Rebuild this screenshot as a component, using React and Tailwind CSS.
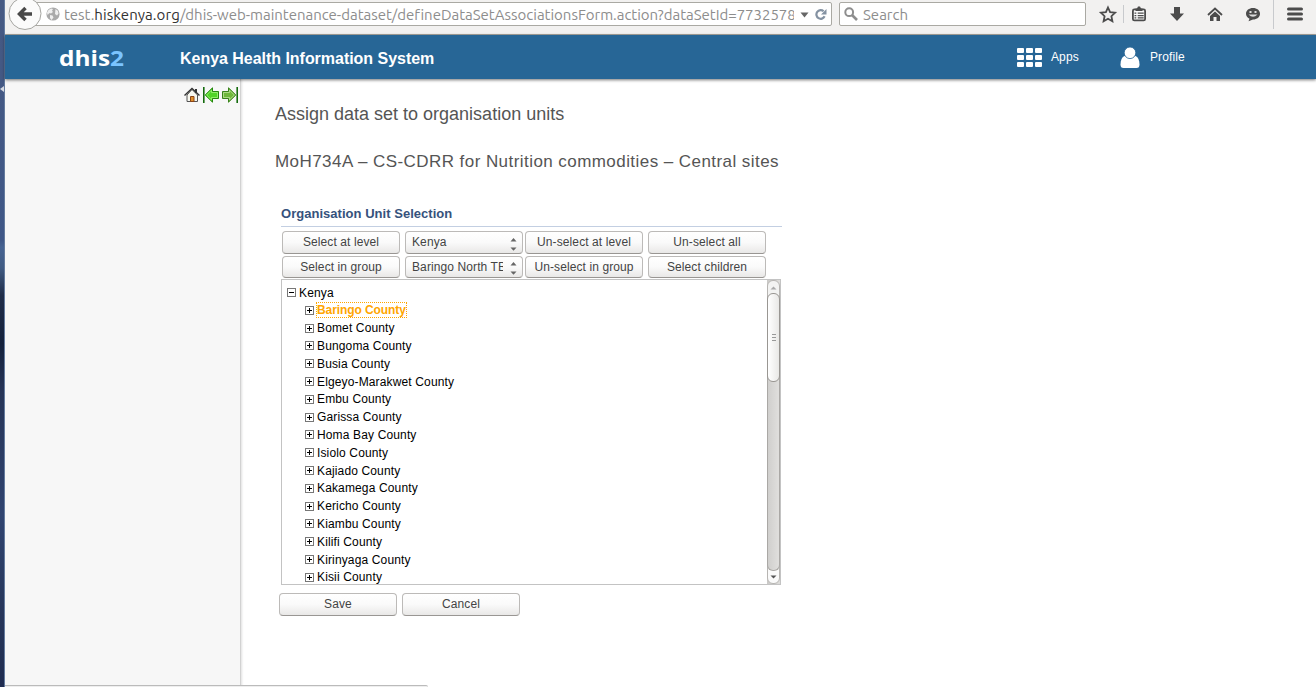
const counties = ['Baringo', 'Bomet', 'Bungoma', 'Busia', 'Elgeyo-Marakwet', 'Embu', 'Garissa', 'Homa Bay', 'Isiolo', 'Kajiado', 'Kakamega', 'Kericho', 'Kiambu', 'Kilifi', 'Kirinyaga', 'Kisii'];

const control = 'box-border shrink-0 w-[118px] rounded-[4px] border border-[#bcbab8] border-b-[#999693] bg-linear-to-b from-white via-[#fafafa] to-[#e9e8e7] text-[12px] leading-[14px] tracking-[0.1px] text-[#444]';

function Button({ children, className = 'h-[23px]' }) {
  return <button className={`${control} ${className} flex items-center justify-center pb-px`}>{children}</button>;
}

function Select({ children, className = 'h-[23px]' }) {
  return (
    <div className={`${control} ${className} flex items-center justify-between pl-[6px] pr-[5px]`}>
      <span className="w-[91px] overflow-hidden whitespace-nowrap pb-px">{children}</span>
      <svg width="7" height="13" viewBox="0 0 7 13" className="mt-[3px] shrink-0" fill="#666">
        <path d="M3.5 0 6.5 3.5h-6zM.5 9.5h6l-3 3.2z" />
      </svg>
    </div>
  );
}

function Toggle({ open }) {
  return (
    <svg width="9" height="9" viewBox="0 0 9 9" shapeRendering="crispEdges" className="shrink-0">
      <path d="M.5.5h8v8h-8z" fill="#fff" stroke="#777" />
      <path d={open ? 'M2 4.5h5' : 'M2 4.5h5M4.5 2v5'} stroke="#000" />
    </svg>
  );
}

function Toolbar() {
  return (
    <div className="flex h-[35px] shrink-0 border-b border-[#aaa79f] bg-[#f2f1f0] font-['Ubuntu','Noto_Sans',sans-serif] text-[15px] text-[#8d8d8d]">
      <div className="relative z-10 w-[35px] shrink-0">
        <svg width="36" height="34" viewBox="5 0 36 34" className="block overflow-visible">
          <circle cx="25" cy="13.5" r="16" fill="#fbfbfb" stroke="#a5a5a1" />
          <path d="M25.5 8 19.5 14l6 6M20.5 14H32" fill="none" stroke="#494949" strokeWidth="3.5" />
        </svg>
      </div>
      <div className="-ml-[7px] mt-[2px] flex h-[24px] w-[799px] shrink-0 items-center rounded-[2px] border border-[#aaa9a3] bg-white pl-[12px]">
        <svg width="14" height="14" viewBox="0 0 14 14" className="shrink-0">
          <circle cx="7" cy="7" r="6.6" fill="#aaa" />
          <path d="M2.5 3 5 1.5 7 2 6 3.800 7 5 5 6.500 3.500 6 1.500 8 1 5.500zM4 8l2.500.5 1 2L5.500 13 4 11zM9.500 2l2.500 2 .5 2.500L11 8.500 9 7z" fill="#efefef" />
        </svg>
        <span className="ml-[4px] w-[730px] shrink-0 overflow-hidden whitespace-nowrap pt-[2px] tracking-[-0.02px]">
          test.<span className="tracking-[0.1px] text-[#333]">hiskenya.org</span>/dhis-web-maintenance-dataset/defineDataSetAssociationsForm.action?dataSetId=7732578
        </span>
        <svg width="9" height="6" viewBox="0 0 9 6" className="ml-[6px] mt-[2px] shrink-0"><path d="M.5.500h8l-4 5z" fill="#666" /></svg>
        <svg width="12" height="13" viewBox="0 0 12 13" className="ml-[6px] shrink-0">
          <path d="M9.6 8.3A4.300 4.300 0 1 1 8.600 3.300" fill="none" stroke="#8492a2" strokeWidth="2.200" />
          <path d="M11.500 1v5.500H6z" fill="#8492a2" />
        </svg>
      </div>
      <div className="ml-[7px] mt-[2px] flex h-[24px] w-[247px] shrink-0 items-center rounded-[2px] border border-[#aaa9a3] bg-white pl-[4px]">
        <svg width="14" height="14" viewBox="0 0 14 14" fill="none" stroke="#8e8e8e"><circle cx="5.200" cy="5.200" r="3.900" strokeWidth="2" /><path d="m8 8 5 5" strokeWidth="2.600" /></svg>
        <span className="ml-[5px] pt-[2px]">Search</span>
      </div>
      <svg width="229" height="34" viewBox="1087 0 229 34" className="ml-px block shrink-0" fill="#4c4c4c">
        <path d="m1108 7.500 2.100 4.700 5 .5-3.700 3.500 1 5.100-4.400-2.600-4.400 2.600 1-5.100-3.700-3.500 5-.5z" fill="none" stroke="#4c4c4c" strokeWidth="1.800" />
        <path d="M1123.500 5v18M1273.500 0v29" stroke="#c8cacd" />
        <rect x="1132.900" y="9.400" width="12.200" height="11" rx="1.500" fill="#fafafa" stroke="#4c4c4c" strokeWidth="1.800" />
        <path d="M1135.500 11V8.500h1.500L1138 6.500h2l1 2h1.500V11z" />
        <path d="M1134.500 12.500h1.800v1.300h-1.800zm3.200 0h6v1.300h-6zm-3.200 2.400h1.800v1.300h-1.800zm3.200 0h6v1.300h-6zm-3.200 2.400h1.800v1.300h-1.800zm3.200 0h6v1.300h-6z" />
        <path d="M1174 7h6v6.500h4l-7 7.500-7-7.500h4z" />
        <path d="M1208 15 1215 8.500l7 6.500" fill="none" stroke="#4c4c4c" strokeWidth="1.800" />
        <path d="m1210 16 5-4.500 5 4.500v5h-3.500v-4h-3v4h-3.500z" />
        <path d="M1253 8c4 0 7 2.400 7 5.800s-3 5.800-7 5.800l-4.500 1.700 1-2.600c-2.300-1-3.500-2.800-3.500-4.900 0-3.400 3-5.800 7-5.800z" />
        <path d="M1249.500 11h2v2h-2zm5 0h2v2h-2z" fill="#ddd" />
        <path d="M1248.500 14.500h9q-4.500 4.500-9 0" fill="#ddd" />
        <path d="M1288.500 9h13M1288.500 14h13M1288.500 19h13" stroke="#4c4c4c" strokeWidth="3" strokeLinecap="round" />
      </svg>
    </div>
  );
}

function Header() {
  return (
    <header className="relative z-10 flex h-[44px] shrink-0 items-center bg-[#276696] text-white shadow-[0_1px_3px_rgba(0,0,0,0.55)]">
      <div className="ml-[54px] w-[121px] font-['Open_Sans'] text-[22px] leading-[30px] font-bold"><span className="inline-block origin-left scale-x-[1.11]">dhis<span className="text-[#7bc4ff]">2</span></span></div>
      <div className="w-[837px] pt-[3px] text-[16px] leading-[20px] font-bold tracking-[-0.03px]">Kenya Health Information System</div>
      <svg width="25" height="19" viewBox="0 0 25 19" fill="#fff">
        {[0, 9, 18].map((x) => [0, 7, 14].map((y) => <rect key={`${x}-${y}`} x={x} y={y} width="7" height="5" rx="1" />))}
      </svg>
      <span className="ml-[9px] w-[69px] text-[12px] tracking-[0.1px]">Apps</span>
      <svg width="20" height="21" viewBox="0 0 20 21" fill="#fff" className="mt-px">
        <path d="M4.500 9C2 10 .5 13 .5 17.500 .5 20 1.500 21 3.500 21h13c2 0 3-1 3-3.500C19.500 13 18 10 15.500 9z" />
        <circle cx="10" cy="5.800" r="5.800" fill="#fff" stroke="#276696" strokeWidth=".8" />
      </svg>
      <span className="ml-[10px] text-[12px] tracking-[0.1px]">Profile</span>
    </header>
  );
}

function Sidebar() {
  return (
    <aside className="w-[236px] shrink-0 border-r border-[#d2d2d2] bg-[#f7f7f7] pl-[179px] pt-[8px] shadow-[1px_0_2px_rgba(0,0,0,0.12)]">
      <div className="flex gap-[3px]">
        <svg width="16" height="16" viewBox="0 0 16 16">
          <path d="M3 8v6.500h10.500V8L8 2.500z" fill="#f7f7ef" stroke="#555" />
          <path d="M12 2v4" stroke="#333" strokeWidth="2" />
          <path d="M.5 8.500 8 1.500l7.500 7" fill="none" stroke="#333" strokeWidth="1.400" />
          <path d="M6.500 9.500h3.500v5H6.500z" fill="#e0902c" stroke="#8a4518" />
        </svg>
        <svg width="16" height="16" viewBox="0 0 16 16">
          <path d="M.8 0v16" stroke="#146b0d" strokeWidth="1.600" />
          <path d="M2.200 8 9.500.8v3.700h6v7h-6v3.700z" fill="#50d427" stroke="#25850f" />
          <path d="M3.700 8 8.500 3.200v2.300h6v5h-6v2.300z" fill="none" stroke="#a1f47b" strokeWidth=".8" />
        </svg>
        <svg width="16" height="16" viewBox="0 0 16 16">
          <path d="M15.200 0v16" stroke="#146b0d" strokeWidth="1.600" />
          <path d="M13.800 8 6.500.8v3.700h-6v7h6v3.700z" fill="#6fb83c" stroke="#38811b" />
          <path d="M12.300 8 7.500 3.200v2.300h-6v5h6v2.300z" fill="none" stroke="#bde398" strokeWidth=".8" />
        </svg>
      </div>
    </aside>
  );
}

function Tree() {
  return (
    <div className="ml-[6px] flex h-[306px] w-[500px] overflow-hidden border border-[#c3c3c3] text-[12px] tracking-[0.140px] text-black">
      <div className="min-w-0 grow pl-[5px] pt-[3.700px]">
        <div className="flex h-[17.800px] items-center gap-[3px]"><Toggle open /><span>Kenya</span></div>
        {counties.map((name, i) => (
          <div key={name} className="flex h-[17.800px] items-center gap-[3px] pl-[18px]">
            <Toggle />
            {i === 0
              ? <span className="-ml-px border border-dotted border-[#ffa500] font-bold leading-[14px] tracking-[-0.080px] text-[#ffa500]">{name} County</span>
              : <span>{name} County</span>}
          </div>
        ))}
      </div>
      <div className="flex w-[13px] shrink-0 flex-col bg-linear-to-r from-[#cac9c7] to-[#dedddb]">
        <div className="-mb-[5px] flex h-[18px] items-start justify-center rounded-t-[6px] border border-[#b7b5b2] bg-[#f3f3f2] pt-[5px]">
          <svg width="7" height="4" viewBox="0 0 7 4"><path d="M.5 3.500h6L3.500.5z" fill="#aaa" /></svg>
        </div>
        <div className="relative z-10 flex h-[89px] shrink-0 items-center justify-center rounded-[6px] border border-[#999692] bg-linear-to-r from-white to-[#e9e8e6]">
          <svg width="4" height="8" viewBox="0 0 4 8"><path d="M0 .5h4M0 3.500h4M0 6.500h4" stroke="#999" /></svg>
        </div>
        <div className="relative -mt-[8px] -mb-[6px] grow rounded-b-[6px] border-x border-b border-[#aaa8a5] bg-linear-to-r from-[#d0cfcd] to-[#e0dfdd]" />
        <div className="flex h-[19px] shrink-0 items-end justify-center rounded-b-[6px] border border-[#b7b5b2] bg-[#fafafa] pb-[4px]">
          <svg width="7" height="4" viewBox="0 0 7 4"><path d="M.5.500h6l-3 3z" fill="#555" /></svg>
        </div>
      </div>
    </div>
  );
}

export default function App() {
  return (
    <div className="flex h-[687px] w-[1316px] overflow-hidden bg-white font-['Liberation_Sans',Arial,sans-serif]">
      <div className="flex w-[5px] shrink-0 border-r border-[#657ca0] bg-[linear-gradient(#475a83_0%,#3f5787_35%,#466392_36%,#405b83_39%,#202d49_43%,#14213c_50%,#263457_57%,#304470_75%,#263559_90%,#202d51_100%)]">
        <svg width="4" height="6" viewBox="0 0 4 6" className="mt-[86px]"><path d="M0 3 4 0v6z" fill="#d5d9e1" /></svg>
      </div>
      <div className="flex min-w-0 grow flex-col">
        <Toolbar />
        <Header />
        <div className="relative flex min-h-0 grow">
          <Sidebar />
          <main className="grow pl-[34px] pt-[24px]">
            <h1 className="h-[22px] text-[18px] leading-[22px] whitespace-nowrap text-[#555]">Assign data set to organisation units</h1>
            <h2 className="mt-[26px] h-[22px] text-[17px] leading-[22px] tracking-[0.440px] whitespace-nowrap text-[#555]">MoH734A – CS-CDRR for Nutrition commodities – Central sites</h2>
            <section className="mt-[32px] w-[507px]">
              <h3 className="ml-[6px] h-[22px] w-[501px] border-b border-[#c3cfe2] text-[13px] leading-[18px] font-bold tracking-[0.030px] text-[#36527c]">Organisation Unit Selection</h3>
              <div className="ml-[7px] mt-[4px] flex">
                <Button>Select at level</Button>
                <div className="ml-[5px] mr-[2px]"><Select>Kenya</Select></div>
                <Button>Un-select at level</Button>
                <div className="ml-[5px]"><Button>Un-select all</Button></div>
              </div>
              <div className="ml-[7px] mt-[2px] flex">
                <Button className="h-[22px]">Select in group</Button>
                <div className="ml-[5px] mr-[2px]"><Select className="h-[22px]">Baringo North TB</Select></div>
                <Button className="h-[22px]">Un-select in group</Button>
                <div className="ml-[5px]"><Button className="h-[22px]">Select children</Button></div>
              </div>
              <div className="mt-px"><Tree /></div>
              <div className="ml-[4px] mt-[8px] flex gap-[5px]"><Button>Save</Button><Button>Cancel</Button></div>
            </section>
          </main>
          <div className="absolute bottom-0 left-0 h-[2px] w-[423px] rounded-tr-[2px] border-t border-[#bbb] bg-[#eee]" />
        </div>
      </div>
    </div>
  );
}
